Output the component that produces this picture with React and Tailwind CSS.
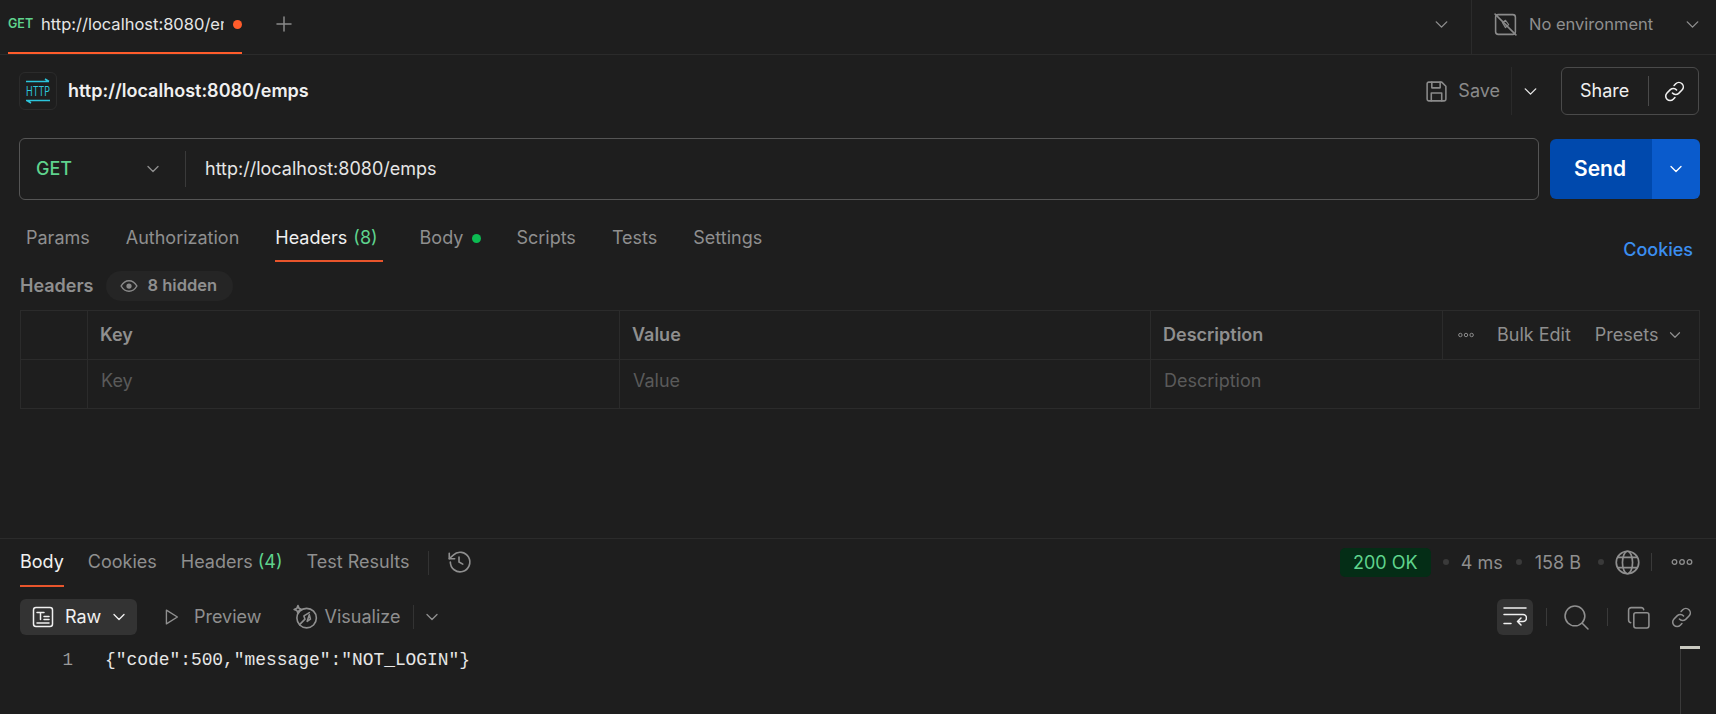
import React from 'react';
import { ChevronDown, Plus } from 'lucide-react';

// small stroke icons that lucide doesn't have in the postman shape
const Icon = ({ size = 22, className = '', children }) => (
  <svg width={size} height={size} viewBox="0 0 24 24" fill="none" stroke="currentColor" strokeWidth="1.5" strokeLinecap="round" strokeLinejoin="round" className={`shrink-0 ${className}`}>
    {children}
  </svg>
);

const Chevron = ({ size = 20, className = '' }) => <ChevronDown size={size} strokeWidth={1.6} className={`shrink-0 ${className}`} />;

const LinkIcon = ({ className }) => (
  <Icon size={25} className={className}>
    <path d="M10 13.500a4.200 4.200 0 0 0 6 .3l3.200-3.200a4.200 4.200 0 0 0-6-6l-1.600 1.600" />
    <path d="M14 10.500a4.200 4.200 0 0 0-6-.3l-3.200 3.200a4.200 4.200 0 0 0 6 6l1.600-1.600" />
  </Icon>
);

const Dots = ({ className = '' }) => (
  <svg width="22" height="8" viewBox="0 0 22 8" fill="none" stroke="currentColor" strokeWidth="1.3" className={`shrink-0 ${className}`}>
    <circle cx="3.500" cy="4" r="2.300" />
    <circle cx="11" cy="4" r="2.300" />
    <circle cx="18.500" cy="4" r="2.300" />
  </svg>
);

const Tab = ({ children, className = '' }) => <span className={`text-[18px] leading-6 whitespace-nowrap ${className}`}>{children}</span>;

const TopBar = () => (
  <div className="h-[55px] flex items-center border-b border-[#2b2b2b] shrink-0">
    <div className="relative h-[54px] w-[234px] ml-2 pb-[6px] flex items-center shrink-0">
      <span className="text-[12.500px] font-semibold text-[#5fd38d] w-[33px]">GET</span>
      <span className="w-[183px] overflow-hidden whitespace-nowrap text-[16.500px] text-[#e6e6e6]">http://localhost:8080/emps</span>
      <span className="ml-[9px] w-[9px] h-[9px] rounded-full bg-[#ff5c2b]" />
      <div className="absolute left-0 right-0 bottom-0 h-[2px] bg-[#ff5c2b]" />
    </div>
    <Plus size={24} strokeWidth={1.5} className="ml-[30px] mb-[6px] text-[#8a8a8a]" />
    <div className="flex-1" />
    <Chevron size={21} className="mb-[6px] text-[#8f8f8f]" />
    <div className="ml-[19px] h-full w-px bg-[#2b2b2b]" />
    <Icon size={25} className="ml-[21px] mb-[6px] text-[#8a8a8a]">
      <rect x="2.500" y="2.500" width="19" height="19" rx="2.500" />
      <path d="M2 2l20 20" />
      <path d="M9 10l3-2 3 4-3 3z" strokeWidth="1.100" />
    </Icon>
    <span className="ml-[11px] mb-[6px] w-[123px] text-[16.500px] text-[#8f8f8f] whitespace-nowrap">No environment</span>
    <Chevron size={21} className="ml-[30px] mr-[13px] mb-[6px] text-[#8f8f8f]" />
  </div>
);

const TitleRow = () => (
  <div className="h-[60px] mt-[6px] flex items-center pl-[19px] pr-[17px] shrink-0">
    <div className="w-[38px] h-[38px] rounded-md border border-[#2b2b2b] flex items-center justify-center">
      <svg width="26" height="26" viewBox="0 0 26 26" fill="none" stroke="#2cc5dc" strokeWidth="1.500" className="overflow-visible">
        <path d="M1 3.500h23M20 1l4 2.500M1 22.500h24M6 25l-4-2.500" />
        <text x="1" y="18" textLength="24" lengthAdjust="spacingAndGlyphs" fontSize="13" fontFamily="Inter, sans-serif" fill="#2cc5dc" stroke="none">HTTP</text>
      </svg>
    </div>
    <span className="ml-[11px] mb-[1px] text-[18px] font-semibold text-[#f0f0f0] whitespace-nowrap">http://localhost:8080/emps</span>
    <div className="flex-1" />
    <Icon size={25} className="text-[#8a8a8a]">
      <path d="M3 4.500A1.500 1.500 0 0 1 4.500 3H17l4 4v12.500a1.500 1.500 0 0 1-1.500 1.500h-15A1.500 1.500 0 0 1 3 19.500z" />
      <path d="M7.500 3v5.500h8V3M7 21v-7.500h10V21" />
    </Icon>
    <span className="ml-[9px] mb-[1px] text-[18px] text-[#8a8a8a]">Save</span>
    <div className="ml-[11px] w-px h-12 bg-[#2a2a2a]" />
    <Chevron size={21} className="ml-2 text-[#e6e6e6]" />
    <div className="ml-[20px] w-[138px] h-12 rounded-md border border-[#4a4a4a] flex items-center">
      <span className="ml-[18px] mb-[1px] text-[18px] text-[#f0f0f0]">Share</span>
      <div className="ml-[19px] w-px h-[30px] bg-[#4a4a4a]" />
      <LinkIcon className="ml-[13px] text-[#f0f0f0]" />
    </div>
  </div>
);

const UrlRow = () => (
  <div className="flex items-center mt-[17px] pl-[19px] pr-4 shrink-0">
    <div className="flex-1 h-[62px] rounded-md border border-[#555555] flex items-center">
      <span className="ml-4 mb-[2px] w-[90px] text-[18px] font-medium text-[#5fd38d]">GET</span>
      <Chevron size={20} className="ml-[17px] text-[#8f8f8f]" />
      <div className="ml-[22px] w-px h-9 bg-[#3a3a3a]" />
      <span className="ml-[19px] mb-[2px] text-[18px] text-[#e6e6e6]">http://localhost:8080/emps</span>
    </div>
    <div className="ml-[11px] w-[150px] h-[60px] rounded-md overflow-hidden flex">
      <div className="w-[102px] pr-[2px] bg-[#0049ad] flex items-center justify-center text-[21px] font-semibold text-white">Send</div>
      <div className="flex-1 bg-[#0a5bcc] flex items-center justify-center text-white">
        <Chevron size={20} />
      </div>
    </div>
  </div>
);

const RequestTabs = () => (
  <div className="flex mt-[13px] pl-[26px] pr-[23px] h-[50px] shrink-0 text-[#8f8f8f]">
    <div className="flex h-[50px] gap-9">
      <Tab className="mt-[13px]">Params</Tab>
      <Tab className="mt-[13px]">Authorization</Tab>
      <div className="relative h-full flex">
        <Tab className="mt-[13px] text-[#f0f0f0]">Headers <span className="ml-[1px] text-[#5fd38d]">(8)</span></Tab>
        <div className="absolute left-0 -right-[5px] top-[47px] h-[2px] bg-[#e8552c]" />
      </div>
      <Tab className="mt-[13px] flex items-center h-6 ml-[6px]">
        Body
        <span className="ml-[9px] w-[9px] h-[9px] rounded-full bg-[#0cbb52]" />
      </Tab>
      <Tab className="mt-[13px] -ml-[1px]">Scripts</Tab>
      <Tab className="mt-[13px]">Tests</Tab>
      <Tab className="mt-[13px]">Settings</Tab>
    </div>
    <div className="flex-1" />
    <span className="mt-[23px] text-[18px] font-medium text-[#3b8ef0]">Cookies</span>
  </div>
);

const cell = 'border-r border-[#2b2b2b] flex items-center';

const HeadersTable = () => (
  <div className="ml-5 mr-4 mt-[9px] border border-[#2b2b2b] shrink-0">
    <div className="flex h-[49px] border-b border-[#2b2b2b] text-[18px] font-semibold text-[#8f8f8f]">
      <div className={`${cell} w-[67px]`} />
      <div className={`${cell} w-[532px] pl-3 pb-[2px]`}>Key</div>
      <div className={`${cell} w-[531px] pl-3 pb-[2px]`}>Value</div>
      <div className={`${cell} w-[292px] pl-3 pb-[2px]`}>Description</div>
      <div className="flex-1 flex items-center font-normal pb-[2px]">
        <Dots className="ml-[12px] mt-[2px] scale-75 text-[#8f8f8f]" />
        <span className="ml-[20px] whitespace-nowrap">Bulk Edit</span>
        <span className="ml-6 whitespace-nowrap">Presets</span>
        <Chevron size={18} className="ml-[7px] mt-[2px]" />
      </div>
    </div>
    <div className="flex h-[48px] text-[18px] text-[#5a5a5a]">
      <div className={`${cell} w-[67px]`} />
      <div className={`${cell} w-[532px] pl-[13px] pb-[7px]`}>Key</div>
      <div className={`${cell} w-[531px] pl-[13px] pb-[7px]`}>Value</div>
      <div className="flex-1 flex items-center pl-[13px] pb-[7px]">Description</div>
    </div>
  </div>
);

const Sep = ({ className = '' }) => <span className={`w-[6px] h-[6px] rounded-full bg-[#3a3a3a] shrink-0 ${className}`} />;

const ResponsePanel = () => (
  <div className="flex-1 flex flex-col min-h-0">
    <div className="flex h-[48px] border-t border-[#2b2b2b] mt-[129px] pl-5 pr-[23px] text-[#8f8f8f] shrink-0">
      <div className="relative h-full">
        <Tab className="block mt-[11px] text-[#f0f0f0]">Body</Tab>
        <div className="absolute left-0 right-0 top-[46px] h-[2px] bg-[#e8552c]" />
      </div>
      <Tab className="block mt-[11px] ml-6">Cookies</Tab>
      <Tab className="block mt-[11px] ml-6">Headers <span className="text-[#5fd38d]">(4)</span></Tab>
      <Tab className="block mt-[11px] ml-6">Test Results</Tab>
      <div className="ml-[18px] mt-3 w-px h-[24px] bg-[#333333]" />
      <Icon size={26} className="ml-[17px] mt-[10px]">
        <path d="M4 12a9 9 0 1 0 2.700-6.400L3 9" />
        <path d="M3 4v5h5M12 7.500V12l3.500 2" />
      </Icon>
      <div className="flex-1" />
      <div className="flex items-center h-[48px] pb-[2px]">
        <span className="w-[91px] h-[29px] rounded-[5px] bg-[#042d16] text-[#5fd38d] text-[18px] flex items-center justify-center">200 OK</span>
        <Sep className="ml-3" />
        <span className="ml-3 text-[18px] whitespace-nowrap">4 ms</span>
        <Sep className="ml-[13px]" />
        <span className="ml-[13px] text-[18px] whitespace-nowrap">158 B</span>
        <Sep className="ml-[17px]" />
        <Icon size={27} className="ml-[10px]">
          <circle cx="12" cy="12" r="10" />
          <ellipse cx="12" cy="12" rx="4.500" ry="10" />
          <path d="M3.500 7.500h17M3.500 16.500h17" />
        </Icon>
        <div className="ml-[10px] w-px h-[18px] bg-[#3a3a3a]" />
        <Dots className="ml-[19px]" />
      </div>
    </div>
    <div className="flex items-center h-9 mt-[13px] pl-5 pr-[22px] shrink-0 text-[#8f8f8f]">
      <div className="w-[117px] h-9 rounded-md bg-[#333333] flex items-center text-[#f0f0f0]">
        <Icon size={24} className="ml-[11px]">
          <rect x="2.500" y="2.500" width="19" height="19" rx="2.500" />
          <path d="M6 7.500h7M9.500 7.500v7M13 11.500h5M13 14.500h5M6 18h12" />
        </Icon>
        <span className="ml-[10px] mb-[2px] text-[18px]">Raw</span>
        <Chevron size={20} className="ml-[8px]" />
      </div>
      <Icon size={22} className="ml-[23px]"><path d="M7 4.500v15l12-7.500z" /></Icon>
      <span className="ml-[12px] mb-[2px] text-[18px]">Preview</span>
      <Icon size={26} className="ml-[30px]">
        <circle cx="13.500" cy="13" r="9" />
        <path d="M7 19l5-5-1-3 5-3M16 10l1 4-3 2z" />
        <path d="M5.500 1.500l1 2.500 2.500 1-2.500 1-1 2.500-1-2.500-2.500-1 2.500-1z" />
      </Icon>
      <span className="ml-[7px] mb-[2px] text-[18px]">Visualize</span>
      <div className="ml-[13px] w-px h-6 bg-[#333333]" />
      <Chevron size={20} className="ml-[8px]" />
      <div className="flex-1" />
      <div className="w-9 h-9 rounded-md bg-[#333333] flex items-center justify-center text-[#f0f0f0]">
        <Icon size={24}>
          <path d="M1 3h22M1 9.500h19a3.500 3.500 0 0 1 0 7h-5.500M18 13l-3.500 3.500L18 20M1 18.500h7" />
        </Icon>
      </div>
      <div className="ml-[13px] w-px h-[18px] bg-[#3a3a3a]" />
      <Icon size={25} className="ml-[17px]">
        <circle cx="10.500" cy="10.500" r="9.500" />
        <path d="M17.500 17.500l5.500 5.500" />
      </Icon>
      <div className="ml-[18px] w-px h-[18px] bg-[#3a3a3a]" />
      <Icon size={25} className="ml-[18px]">
        <path d="M4.500 17A2.500 2.500 0 0 1 2.500 14.500V5A2.500 2.500 0 0 1 5 2.500h9.500A2.500 2.500 0 0 1 17 4.500" />
        <rect x="7.500" y="7.500" width="14.500" height="14.500" rx="2" />
      </Icon>
      <LinkIcon className="ml-[18px]" />
    </div>
    <div className="flex-1 flex min-h-0 mt-[11px] pl-5">
      <span className="w-[53px] mt-[1px] text-right text-[17.500px] leading-[26px] text-[#9a9a9a] font-['Liberation_Mono',monospace]">1</span>
      <span className="ml-[32px] mt-[1px] text-[#e6e6e6] text-[17.900px] leading-[26px] whitespace-pre font-['Liberation_Mono',monospace]">{'{"code":500,"message":"NOT_LOGIN"}'}</span>
      <div className="flex-1" />
      <div className="w-[36px] flex flex-col">
        <div className="w-5 h-[3px] bg-[#c9c9c0]" />
        <div className="w-px flex-1 bg-[#3a3a3a]" />
      </div>
    </div>
  </div>
);

export default function App() {
  return (
    <div className="w-[1716px] h-[714px] overflow-hidden flex flex-col bg-[#1e1e1e] font-['Inter',sans-serif]">
      <TopBar />
      <TitleRow />
      <UrlRow />
      <RequestTabs />
      <div className="flex items-center h-[30px] mt-2 pl-5 shrink-0 text-[#8f8f8f]">
        <span className="mb-[2px] text-[18px] font-semibold">Headers</span>
        <div className="ml-3 w-[127px] h-[30px] rounded-[15px] bg-[#252525] flex items-center">
          <svg width="18" height="18" viewBox="0 0 24 24" fill="none" className="ml-[14px] text-[#8a8a8a]">
            <path d="M1.500 12S5.500 5 12 5s10.500 7 10.500 7-4 7-10.500 7S1.500 12 1.500 12z" stroke="currentColor" strokeWidth="2" />
            <circle cx="12" cy="12" r="3.500" fill="currentColor" />
          </svg>
          <span className="ml-[10px] mb-[1px] text-[16.500px] font-semibold">8 hidden</span>
        </div>
      </div>
      <HeadersTable />
      <ResponsePanel />
    </div>
  );
}
